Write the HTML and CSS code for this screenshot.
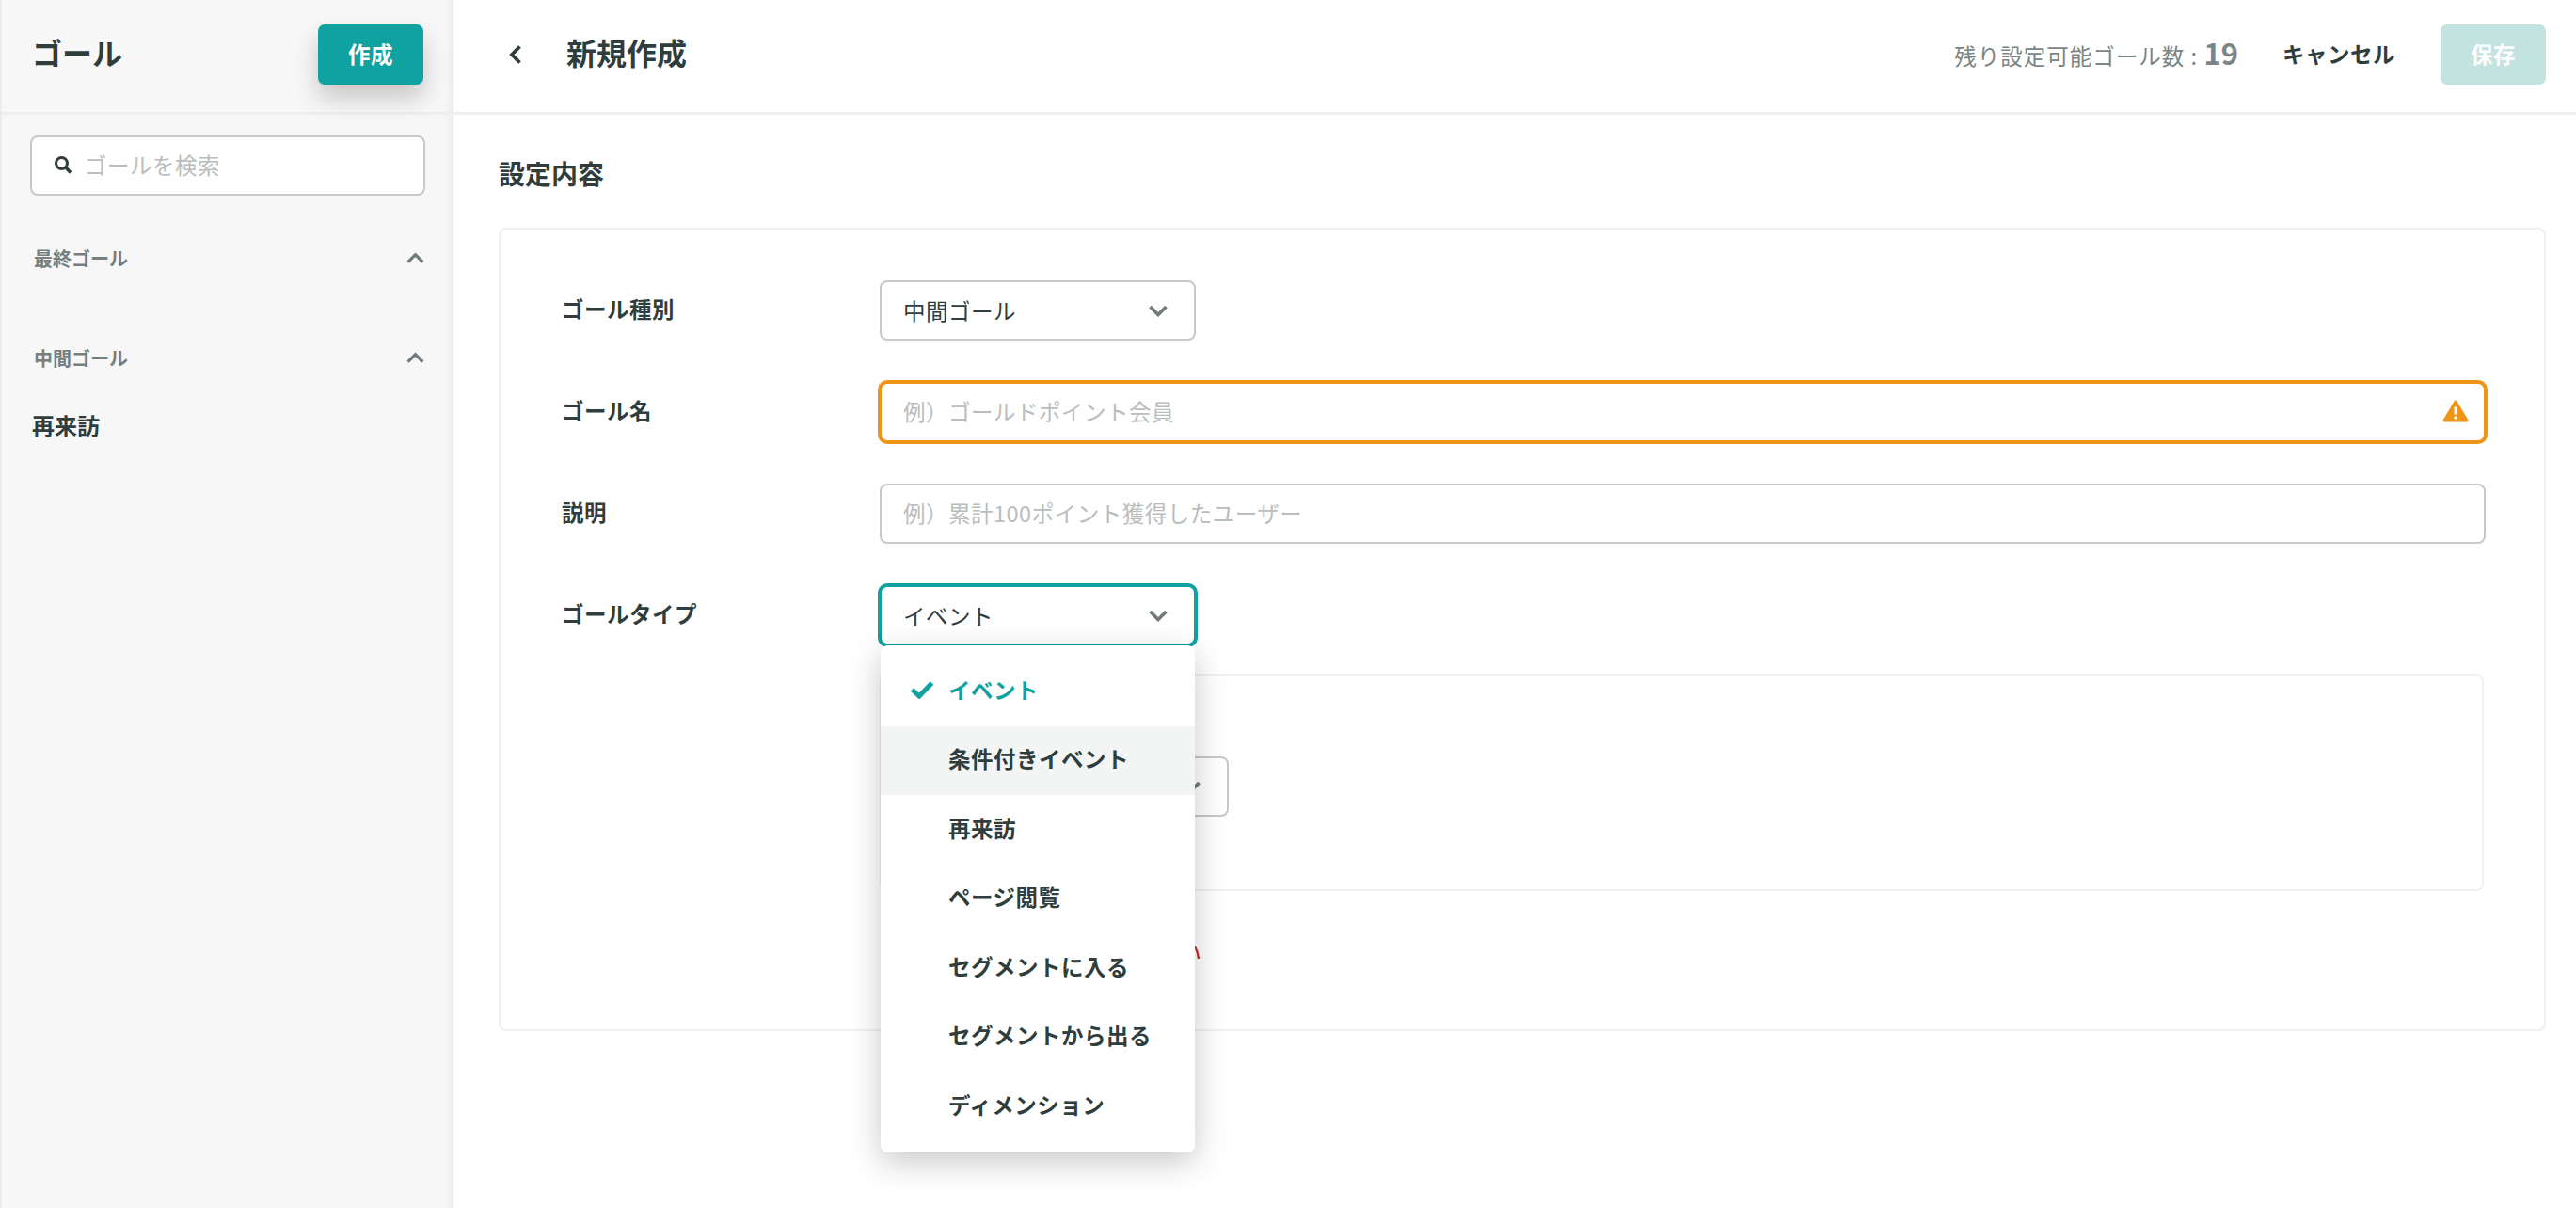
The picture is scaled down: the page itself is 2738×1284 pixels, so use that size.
FILE: index.html
```html
<!DOCTYPE html>
<html lang="ja">
<head>
  <meta charset="UTF-8">
  <title>ゴール</title>
  <link rel="stylesheet" href="styles.css">
</head>
<body>
  <div class="app">
    <!-- サイドバー -->
    <aside class="sidebar">
      <div class="side-head">
        <h2 class="side-title">ゴール</h2>
        <button class="btn btn-primary">作成</button>
      </div>
      <div class="search">
        <svg class="search-icon" viewBox="0 0 20 20"><circle cx="8.5" cy="8.5" r="6" fill="none" stroke="#2f3d3d" stroke-width="3"/><path d="M13 13l5 5.5" stroke="#2f3d3d" stroke-width="3.4" fill="none"/></svg>
        <span class="placeholder">ゴールを検索</span>
      </div>
      <div class="side-group">
        <span>最終ゴール</span>
        <svg class="chev-up" viewBox="0 0 18 12"><path d="M1.5 10L9 2.5l7.5 7.5" fill="none" stroke="#6f7a7a" stroke-width="3"/></svg>
      </div>
      <div class="side-group side-group-2">
        <span>中間ゴール</span>
        <svg class="chev-up" viewBox="0 0 18 12"><path d="M1.5 10L9 2.5l7.5 7.5" fill="none" stroke="#6f7a7a" stroke-width="3"/></svg>
      </div>
      <div class="side-item">再来訪</div>
    </aside>

    <main class="main">
      <header class="top">
        <svg class="back" viewBox="0 0 14 20"><path d="M11.5 1.5L3 10l8.5 8.5" fill="none" stroke="#2f3d3d" stroke-width="3.8"/></svg>
        <h1 class="page-title">新規作成</h1>
        <div class="remain">残り設定可能ゴール数 : <b>19</b></div>
        <button class="btn btn-cancel">キャンセル</button>
        <button class="btn btn-save">保存</button>
      </header>

      <div class="content">
        <h3 class="section-title">設定内容</h3>
        <div class="card">
          <div class="row">
            <div class="label">ゴール種別</div>
            <div class="field select"><span>中間ゴール</span>
              <svg class="chev" viewBox="0 0 20 13"><path d="M1.5 2L10 10.5 18.5 2" fill="none" stroke="#6f7a7a" stroke-width="3.6"/></svg>
            </div>
          </div>
          <div class="row">
            <div class="label">ゴール名</div>
            <div class="field wide warn"><span class="placeholder">例）ゴールドポイント会員</span>
              <svg class="warn-icon" viewBox="0 0 28 24"><path d="M14 2L26 22H2z" fill="#ee9416" stroke="#ee9416" stroke-width="3" stroke-linejoin="round"/><path d="M14 7.5v8" stroke="#fff" stroke-width="3"/><circle cx="14" cy="19" r="1.7" fill="#fff"/></svg>
            </div>
          </div>
          <div class="row">
            <div class="label">説明</div>
            <div class="field wide"><span class="placeholder">例）累計100ポイント獲得したユーザー</span></div>
          </div>
          <div class="row">
            <div class="label">ゴールタイプ</div>
            <div class="dropdown">
              <div class="field select active"><span>イベント</span>
                <svg class="chev" viewBox="0 0 20 13"><path d="M1.5 2L10 10.5 18.5 2" fill="none" stroke="#6f7a7a" stroke-width="3.6"/></svg>
              </div>
              <ul class="menu">
                <li class="menu-item checked">
                  <svg class="check" viewBox="0 0 26 20"><path d="M2.5 10l7.5 7L23.5 3" fill="none" stroke="#10a2a0" stroke-width="5"/></svg>イベント
                </li>
                <li class="menu-item hover">条件付きイベント</li>
                <li class="menu-item">再来訪</li>
                <li class="menu-item">ページ閲覧</li>
                <li class="menu-item">セグメントに入る</li>
                <li class="menu-item">セグメントから出る</li>
                <li class="menu-item">ディメンション</li>
              </ul>
            </div>
          </div>
          <div class="sub-box">
            <div class="field select sub-select"><span></span>
              <svg class="chev" viewBox="0 0 20 13"><path d="M1.5 2L10 10.5 18.5 2" fill="none" stroke="#6f7a7a" stroke-width="3.6"/></svg>
            </div>
          </div>
          <div class="remove">
            <svg viewBox="0 0 16 18"><path d="M8 2q3 5 4 13" fill="none" stroke="#c0322c" stroke-width="2.4"/></svg>
          </div>
        </div>
      </div>
    </main>
  </div>
</body>
</html>
```

FILE: styles.css
```css
* {
  box-sizing: border-box;
}
html, body {
  margin: 0;
  height: 100%;
}
body {
  font-family: "Noto Sans CJK JP", "Noto Sans", sans-serif;
  font-size: 23.5px;
  letter-spacing: 0.5px;
  color: #2f3d3d;
  background: #fff;
}
h1, h2, h3, ul {
  margin: 0;
  padding: 0;
}
.app {
  display: flex;
  height: 1284px;
  overflow: hidden;
}

/* sidebar */
.sidebar {
  width: 482px;
  flex: none;
  background: #f7f7f7;
  border-left: 2px solid #ececec;
  box-shadow: inset -14px 0 14px -14px rgba(0,0,0,0.09);
}
.side-head {
  height: 122px;
  padding: 26px 32px 0 32px;
  display: flex;
  justify-content: space-between;
  align-items: flex-start;
  border-bottom: 3px solid #eeeeee;
}
.side-title {
  font-size: 32px;
  letter-spacing: 0;
  line-height: 58px;
  font-weight: 700;
}
.btn {
  font-family: inherit;
  font-size: 23.5px;
  letter-spacing: 0.5px;
  font-weight: 700;
  border: none;
  border-radius: 7px;
  height: 64px;
  width: 112px;
  padding: 0 0 3px;
}
.btn-primary {
  background: #10a2a0;
  color: #fff;
  box-shadow: 0 14px 26px rgba(0,0,0,0.2);
}
.search {
  display: flex;
  align-items: center;
  gap: 13px;
  height: 64px;
  margin: 22px 30px 0 30px;
  padding: 0 0 2px 23px;
  background: #fff;
  border: 2px solid #c8c8c8;
  border-radius: 8px;
}
.search-icon {
  width: 20px;
  height: 20px;
}
.placeholder {
  color: #b9bdbd;
}
.side-group {
  display: flex;
  justify-content: space-between;
  align-items: center;
  height: 40px;
  margin: 46px 31px 0 34px;
  font-size: 20px;
  letter-spacing: 0;
  font-weight: 700;
  color: #757f7f;
}
.side-group-2 {
  margin-top: 66px;
}
.chev-up {
  width: 19px;
  height: 13px;
}
.side-item {
  margin: 32px 0 0 32px;
  font-size: 24px;
  letter-spacing: 0;
  line-height: 40px;
  font-weight: 700;
}

/* main */
.main {
  flex: 1;
  min-width: 0;
}
.top {
  height: 122px;
  padding: 26px 32px 0 59px;
  display: flex;
  align-items: flex-start;
  border-bottom: 3px solid #eeeeee;
}
.back {
  width: 14px;
  height: 20px;
  margin-top: 22px;
}
.page-title {
  font-size: 32px;
  letter-spacing: 0;
  line-height: 58px;
  font-weight: 700;
  margin-left: 47px;
}
.remain {
  margin-left: auto;
  line-height: 60px;
  color: #7b8585;
  letter-spacing: 1px;
}
.remain b {
  font-size: 31px;
  letter-spacing: 0;
}
.btn-cancel {
  background: none;
  color: #2f3d3d;
  width: auto;
  margin-left: 47px;
}
.btn-save {
  background: #c3e3e1;
  color: #fff;
  margin-left: 48px;
}
.content {
  padding: 0 32px 0 48px;
}
.section-title {
  font-size: 28px;
  letter-spacing: 0;
  font-weight: 700;
  line-height: 40px;
  margin-top: 42px;
}
.card {
  margin-top: 38px;
  height: 854px;
  padding: 54px 62px 0 65px;
  background: #fff;
  border: 2px solid #f0f0f0;
  border-radius: 8px;
}
.row {
  display: flex;
  align-items: flex-start;
  margin-bottom: 44px;
}
.label {
  width: 338px;
  flex: none;
  line-height: 60px;
  font-weight: 700;
}
.field {
  display: flex;
  align-items: center;
  justify-content: space-between;
  height: 64px;
  padding: 0 28px 0 23px;
  background: #fff;
  border: 2px solid #c8c8c8;
  border-radius: 8px;
}
.select {
  width: 336px;
}
.wide {
  flex: 1;
  padding-bottom: 3px;
}
.warn {
  border-color: #ee9416;
  box-shadow: 0 0 0 2px #ee9416;
  padding-right: 16px;
}
.warn-icon {
  width: 28px;
  height: 24px;
}
.active {
  border-color: #10a2a0;
  box-shadow: 0 0 0 2px #10a2a0;
}
.chev {
  width: 20px;
  height: 13px;
}

/* dropdown */
.dropdown {
  position: relative;
}
.menu {
  position: absolute;
  top: 64px;
  left: 1px;
  width: 334px;
  padding: 12px 0;
  list-style: none;
  background: #fff;
  border-radius: 8px;
  box-shadow: 0 10px 34px rgba(0,0,0,0.22);
  z-index: 10;
}
.menu-item {
  display: flex;
  align-items: center;
  height: 73.5px;
  padding: 0 0 4px 72px;
  font-weight: 700;
}
.menu-item.hover {
  background: #f3f5f5;
}
.menu-item.checked {
  color: #10a2a0;
  padding-left: 31px;
}
.check {
  width: 26px;
  height: 20px;
  margin-right: 15px;
}
.sub-box {
  margin: -14px 0 0 338px;
  width: 1705px;
  height: 231px;
  padding: 86px 0 0 33px;
  border: 2px solid #f0f0f0;
  border-radius: 8px;
}
.remove {
  margin: 57px 0 0 665px;
  width: 16px;
  height: 18px;
}
.remove svg {
  display: block;
  width: 16px;
  height: 18px;
}
```
